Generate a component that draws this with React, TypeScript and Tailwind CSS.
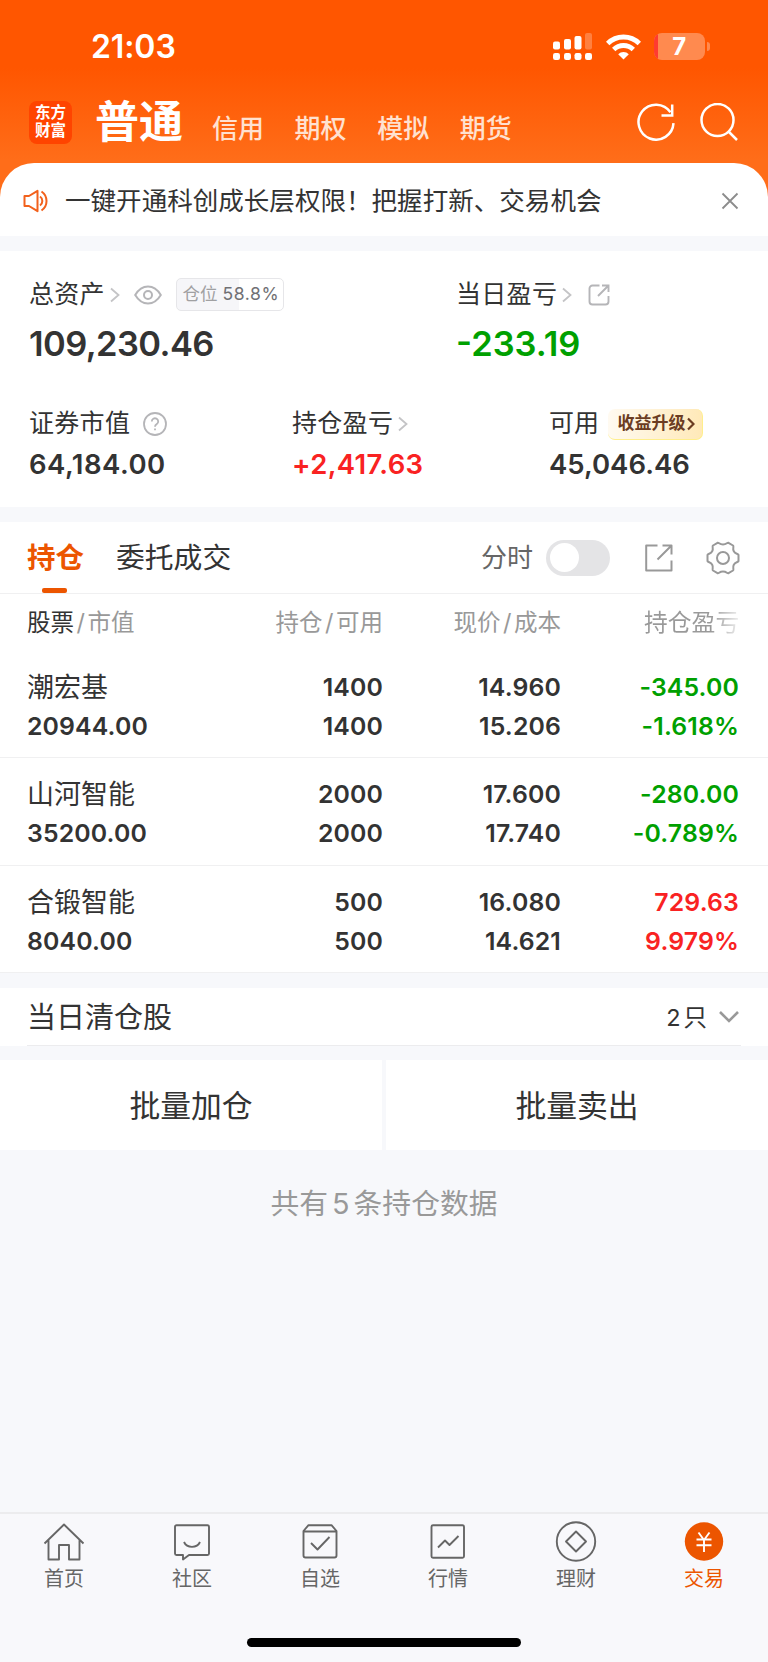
import type { ReactNode } from 'react'

const holdings = [
  { name: '潮宏基', value: '20944.00', amount: '1400', usable: '1400', price: '14.960', cost: '15.206', profit: '-345.00', rate: '-1.618%', up: false },
  { name: '山河智能', value: '35200.00', amount: '2000', usable: '2000', price: '17.600', cost: '17.740', profit: '-280.00', rate: '-0.789%', up: false },
  { name: '合锻智能', value: '8040.00', amount: '500', usable: '500', price: '16.080', cost: '14.621', profit: '729.63', rate: '9.979%', up: true },
]

function Chevron() {
  return (
    <svg width="10" height="16" viewBox="0 0 10 16" fill="none" stroke="#c4c4c6" strokeWidth="1.8">
      <path d="M1 1.5 8.5 8 1 14.5" />
    </svg>
  )
}

function StatusBar() {
  return (
    <div className="h-[93px] flex items-center pl-[91px] pr-[58px]">
      <span className="text-[32px] leading-none font-semibold tracking-[-0.1px]">21:03</span>
      <div className="ml-auto flex items-center">
        <svg width="40" height="28" viewBox="0 0 40 28" fill="#fff" className="mr-[13px]">
          <rect x="0" y="8.5" width="7" height="8" rx="2" />
          <rect x="11" y="6" width="7" height="10.5" rx="2" />
          <rect x="21.5" y="3" width="7" height="13.5" rx="2" />
          <rect x="32" y="0" width="7" height="16.5" rx="2" opacity="0.25" />
          <rect x="0" y="20" width="7" height="7" rx="2.2" />
          <rect x="11" y="20" width="7" height="7" rx="2.2" />
          <rect x="21.5" y="20" width="7" height="7" rx="2.2" />
          <rect x="32" y="20" width="7" height="7" rx="2.2" />
        </svg>
        <svg width="35" height="26" viewBox="0 0 35 26" fill="none" stroke="#fff" strokeWidth="4.8" className="mr-[13px]">
          <path d="M1.7 9.5a22.5 22.5 0 0 1 31.6 0" />
          <path d="M7.7 15.5a14 14 0 0 1 19.6 0" />
          <path d="M17.5 25.5 12.2 20.2a7.5 7.5 0 0 1 10.6 0z" fill="#fff" stroke="none" />
        </svg>
        <div className="w-[51px] h-[27px] rounded-[8px] bg-[#ff8a4f] overflow-hidden flex">
          <div className="w-[3.5px] bg-[#ff3b30]" />
          <span className="flex-1 text-center text-[24px] leading-[27px] font-bold pr-[4px]">7</span>
        </div>
        <div className="ml-[2px] w-[3px] h-[9px] rounded-r-full bg-[#ff8a4f]" />
      </div>
    </div>
  )
}

function Header() {
  return (
    <div className="h-[70px] flex pl-[29px] pr-[30px]">
      <div className="mt-[8px] w-[43px] h-[43px] rounded-[8px] bg-[#ff4400] text-[15.5px] leading-[18px] font-bold text-center pt-[3px]">
        东方
        <br />
        财富
      </div>
      <span className="ml-[23px] w-[94px] text-[44px] leading-[59px] font-bold">普通</span>
      <div className="ml-[23px] flex text-[26px] leading-[72px] font-medium text-[#ffe1d0]">
        {['信用', '期权', '模拟', '期货'].map((t) => (
          <span key={t} className="w-[82.6px]">{t}</span>
        ))}
      </div>
      <div className="ml-auto mt-[10px] flex gap-[25px]">
        <svg width="38" height="38" viewBox="0 0 38 38" fill="none" stroke="#fff" strokeWidth="2.5">
          <path d="M36.5 20.2A17.5 17.5 0 1 1 33.5 9.3" />
          <path d="M35.2 1.5V12.5H24.5" />
        </svg>
        <svg width="38" height="38" viewBox="0 0 38 38" fill="none" stroke="#fff" strokeWidth="2.5">
          <circle cx="17.5" cy="17" r="16" />
          <path d="M28.5 28.5 37 37" />
        </svg>
      </div>
    </div>
  )
}

function Notice() {
  return (
    <div className="h-[73px] rounded-t-[34px] bg-white flex items-center pl-[23px] pr-[29px] pt-[3px]">
      <svg width="26" height="24" viewBox="0 0 26 24" fill="none" stroke="#f2611c" strokeWidth="2" strokeLinejoin="round">
        <path d="M1.5 7H6L14.5 1.8V22.2L6 17H1.5z" />
        <path d="M17 7.5a5.5 5.5 0 0 1 0 9" />
        <path d="M18.5 2.5a11.5 11.5 0 0 1 0 19" />
      </svg>
      <span className="ml-[16px] text-[25.55px]">一键开通科创成长层权限！把握打新、交易机会</span>
      <svg width="18" height="18" viewBox="0 0 18 18" stroke="#8c8c8c" strokeWidth="1.8" className="ml-auto">
        <path d="M1.5 1.5l15 15M16.5 1.5l-15 15" />
      </svg>
    </div>
  )
}

function Assets() {
  return (
    <div className="mt-[15px] h-[256px] bg-white pl-[29px] pt-[25.5px]">
      <div className="flex">
        <div className="w-[427px]">
          <div className="h-[36px] flex items-center text-[25px]">
            <span className="tracking-[0.3px]">总资产</span>
            <span className="ml-[5px] mr-[14px]"><Chevron /></span>
            <svg width="28" height="20" viewBox="0 0 28 20" fill="none" stroke="#b5b5b8" strokeWidth="2">
              <path d="M1.2 10C4.5 4.5 9 1.5 14 1.5s9.5 3 12.8 8.5C23.5 15.5 19 18.5 14 18.5S4.500 15.5 1.2 10z" />
              <circle cx="14" cy="10" r="4" />
            </svg>
            <div className="ml-[14px] w-[108px] h-[33px] rounded-[5px] border border-[#e6e6e9] bg-[linear-gradient(to_right,#f6f6f9_58.8%,#fff_58.8%)] flex items-center justify-center gap-[5px] pl-[2px] text-[17.5px] text-[#a0a0a2]">
              <span>仓位</span>
              <span className="tracking-[0.6px] text-[#707074]">58.8%</span>
            </div>
          </div>
          <div className="mt-[11.5px] text-[34.5px] leading-[40px] font-semibold tracking-[-0.6px]">109,230.46</div>
        </div>
        <div>
          <div className="h-[36px] flex items-center text-[25px]">
            <span className="tracking-[0.3px]">当日盈亏</span>
            <span className="ml-[5px] mr-[16px]"><Chevron /></span>
            <svg width="22" height="22" viewBox="0 0 22 22" fill="none" stroke="#b5b5b8" strokeWidth="1.9">
              <path d="M11.5 1.5H4.5a3 3 0 0 0-3 3v13a3 3 0 0 0 3 3h13a3 3 0 0 0 3-3V12" />
              <path d="M10 12 20 2M14 1.5h6.5V8" />
            </svg>
          </div>
          <div className="mt-[11.5px] text-[34.5px] leading-[40px] font-semibold text-[#00a000]">-233.19</div>
        </div>
      </div>

      <div className="mt-[42px] flex">
        <div className="w-[263px]">
          <div className="h-[36px] flex items-center text-[25px]">
            <span className="tracking-[0.3px]">证券市值</span>
            <svg width="24" height="24" viewBox="0 0 24 24" fill="none" stroke="#b5b5b8" strokeWidth="1.8" className="ml-[13px]">
              <circle cx="12" cy="12" r="11" />
              <path d="M8.8 9.5a3.2 3.2 0 1 1 5 2.6c-1.2.8-1.8 1.3-1.8 2.7M12 16.5v1.8" />
            </svg>
          </div>
          <div className="mt-[3.5px] text-[27.5px] leading-[36px] font-semibold tracking-[0.5px]">64,184.00</div>
        </div>
        <div className="w-[257px]">
          <div className="h-[36px] flex items-center text-[25px]">
            <span className="tracking-[0.3px]">持仓盈亏</span>
            <span className="ml-[5px]"><Chevron /></span>
          </div>
          <div className="mt-[3.5px] text-[27.5px] leading-[36px] font-semibold tracking-[0.35px] text-[#f92222]">+2,417.63</div>
        </div>
        <div>
          <div className="h-[36px] flex items-center text-[25px]">
            <span>可用</span>
            <div className="ml-[9px] w-[95px] h-[31px] rounded-[7px] border-b border-r border-[#ffee8c] bg-linear-to-r from-[#fffaf1] to-[#ffe9b8] flex items-center justify-center pl-[2px] text-[17px] font-bold text-[#6b3c22]">
              收益升级
              <svg width="8" height="14" viewBox="0 0 8 14" fill="none" stroke="#6b3c22" strokeWidth="2.2" className="ml-[1px]">
                <path d="M1 1.5 6.5 7 1 12.5" />
              </svg>
            </div>
          </div>
          <div className="mt-[3.5px] text-[27.5px] leading-[36px] font-semibold">45,046.46</div>
        </div>
      </div>
    </div>
  )
}

function Tabs() {
  return (
    <div className="mt-[15px] h-[72px] bg-white border-b border-[#f0f0f1] flex pl-[27px] pr-[28px]">
      <div className="relative w-[56px] text-[28.5px] leading-[72px] font-bold text-[#ec5500] whitespace-nowrap">
        持仓
        <div className="absolute bottom-0 left-[15px] w-[25px] h-[5px] rounded-[2px] bg-[#ec5500]" />
      </div>
      <span className="ml-[33px] text-[28.8px] leading-[72px]">委托成交</span>
      <div className="ml-auto flex items-center">
        <span className="text-[26px] text-[#666]">分时</span>
        <div className="ml-[13px] w-[64px] h-[36px] rounded-full bg-[#e4e4e6] p-[3.5px]">
          <div className="w-[29px] h-[29px] rounded-full bg-white" />
        </div>
        <svg width="28" height="28" viewBox="0 0 28 28" fill="none" stroke="#999" strokeWidth="2" strokeLinejoin="round" className="ml-[35px]">
          <path d="M12.5 1.5H1.2V26.5H26.5V16.5" />
          <path d="M12.5 15.5 26 2M17.5 1.5h9v9" />
        </svg>
        <svg width="34" height="34" viewBox="0 0 34 34" fill="none" stroke="#999" strokeWidth="2" strokeLinejoin="round" className="ml-[33px]">
          <path d="M11.5 1.8C13 1.3 13.2 3.6 17 3.6S21 1.3 22.5 1.8L27 4.5C28.3 5.5 26.2 7.2 27.8 10.2S31.8 12.3 32.5 14V20C31.8 21.7 29.4 20.8 27.8 23.8S28.3 28.5 27 29.5L22.5 32.2C21 32.7 20.8 30.4 17 30.4S13 32.7 11.5 32.2L7 29.5C5.7 28.5 7.8 26.8 6.2 23.8S2.2 21.7 1.5 20V14C2.2 12.3 4.6 13.2 6.2 10.2S5.7 5.5 7 4.5z" />
          <circle cx="17" cy="17" r="6" />
        </svg>
      </div>
    </div>
  )
}

function Cell({ children }: { children: ReactNode }) {
  return <div className="w-[178px] text-right">{children}</div>
}

function Holdings() {
  return (
    <div className="bg-white">
      <div className="h-[57px] pl-[27px] flex text-[23.5px] leading-[58px] text-[#999]">
        <div className="w-[178px]">
          <span className="text-[#333]">股票</span>
          <span className="mx-[2.5px]">/</span>市值
        </div>
        <Cell>持仓<span className="mx-[2.5px]">/</span>可用</Cell>
        <Cell>现价<span className="mx-[2.5px]">/</span>成本</Cell>
        <div className="ml-[83px] w-[95px] text-[23.8px] bg-linear-to-r from-[#999] from-70% to-[#eee] bg-clip-text text-transparent">持仓盈亏</div>
      </div>
      {holdings.map((h) => (
        <div key={h.name} className="h-[107.33px] border-b border-[#f0f0f1] pl-[27px] pt-[17px] flex text-[24.8px] leading-[39px] font-semibold tracking-[0.15px]">
          <div className="w-[178px]">
            <div className="text-[27px] font-normal tracking-normal">{h.name}</div>
            <div>{h.value}</div>
          </div>
          <Cell>
            <div>{h.amount}</div>
            <div>{h.usable}</div>
          </Cell>
          <Cell>
            <div>{h.price}</div>
            <div>{h.cost}</div>
          </Cell>
          <div className={h.up ? 'w-[178px] text-right text-[#f92222]' : 'w-[178px] text-right text-[#00a000]'}>
            <div>{h.profit}</div>
            <div>{h.rate}</div>
          </div>
        </div>
      ))}
    </div>
  )
}

function TabBar() {
  return (
    <div className="mt-auto h-[150px] border-t-2 border-[#ececee] bg-[#f8f8fb]">
      <div className="grid grid-cols-6 text-[20px] leading-[28px] text-[#666]">
        {navItems.map((item) => (
          <div key={item.label} className={item.label === '交易' ? 'flex flex-col items-center text-[#ec5500]' : 'flex flex-col items-center'}>
            <svg width="42" height="42" viewBox="0 0 42 42" fill="none" stroke="currentColor" strokeWidth="1.9" strokeLinejoin="round" className="mt-[7px] mb-[2px]">
              {item.icon}
            </svg>
            <span>{item.label}</span>
          </div>
        ))}
      </div>
      <div className="mx-auto mt-[45px] w-[274px] h-[9px] rounded-full bg-black" />
    </div>
  )
}

const navItems = [
  { label: '首页', icon: <path d="M1.5 22.5 21 3.5 40.5 22.5M5.5 19V38.5H16V24H26V38.5H36.5V19" /> },
  {
    label: '社区',
    icon: (
      <>
        <path d="M5.5 4.2H36.5a1.5 1.5 0 0 1 1.5 1.5V32.5a1.5 1.5 0 0 1-1.5 1.5H18L12 38.5V34H5.5A1.5 1.5 0 0 1 4 32.5V5.7a1.5 1.5 0 0 1 1.5-1.5z" />
        <path d="M13 21c3 6.5 13 6.5 16 0" />
      </>
    ),
  },
  {
    label: '自选',
    icon: (
      <>
        <path d="M4.5 10V34.5a2 2 0 0 0 2 2H35.5a2 2 0 0 0 2-2V10L32.5 4.2H9.5zM4.5 10.5H37.5" />
        <path d="M12 22 18.5 28.5 30.5 16" />
      </>
    ),
  },
  {
    label: '行情',
    icon: (
      <>
        <rect x="4.5" y="4.2" width="32.5" height="32.5" rx="1.5" />
        <path d="M11 26.5 18 19.5 22.5 24 31.5 15" />
      </>
    ),
  },
  {
    label: '理财',
    icon: (
      <>
        <circle cx="21" cy="20.5" r="19.2" />
        <path d="M21 10.5 31 20.5 21 30.5 11 20.5z" />
      </>
    ),
  },
  {
    label: '交易',
    icon: (
      <>
        <circle cx="21" cy="20.5" r="19.2" fill="currentColor" stroke="none" />
        <path d="M15.5 11.5 21 19 26.5 11.5M21 19V31M13.5 18.5H28.5M13.5 24.3H28.5" stroke="#fff" />
      </>
    ),
  },
]

export default function App() {
  return (
    <main className="w-[768px] h-[1662px] flex flex-col bg-[#f7f8fb] text-[#333] whitespace-nowrap overflow-hidden font-['Inter','Noto_Sans_CJK_SC',sans-serif]">
      {/* Orange top, runs on behind the notice corners */}
      <div className="bg-[linear-gradient(to_bottom,#ff5600_0px,#ff5600_68px,#ff6d19_160px,#ff6d19_200px)] text-white">
        <StatusBar />
        <Header />
        <div className="text-[#333]">
          <Notice />
        </div>
      </div>

      <Assets />
      <Tabs />
      <Holdings />

      {/* Cleared today */}
      <div className="mt-[15px] h-[58px] bg-white px-[27px]">
        <div className="h-full border-b border-[#ececee] flex items-center pt-[2px] pr-[2px]">
          <span className="text-[29px]">当日清仓股</span>
          <span className="ml-auto text-[23.5px]">2<span className="ml-[3px]">只</span></span>
          <svg width="20" height="14" viewBox="0 0 20 14" fill="none" stroke="#999" strokeWidth="2.6" className="ml-[12px]">
            <path d="M1 2 10 11 19 2" />
          </svg>
        </div>
      </div>

      <div className="mt-[14px] h-[90px] grid grid-cols-2 gap-[4px] text-[30.8px] leading-[92px] text-center">
        <div className="h-[90px] bg-white">批量加仓</div>
        <div className="h-[90px] bg-white">批量卖出</div>
      </div>

      <div className="mt-[34px] text-[28.8px] leading-[40px] text-center text-[#999]">
        共有<span className="mx-[4px]">5</span>条持仓数据
      </div>

      <TabBar />
    </main>
  )
}
